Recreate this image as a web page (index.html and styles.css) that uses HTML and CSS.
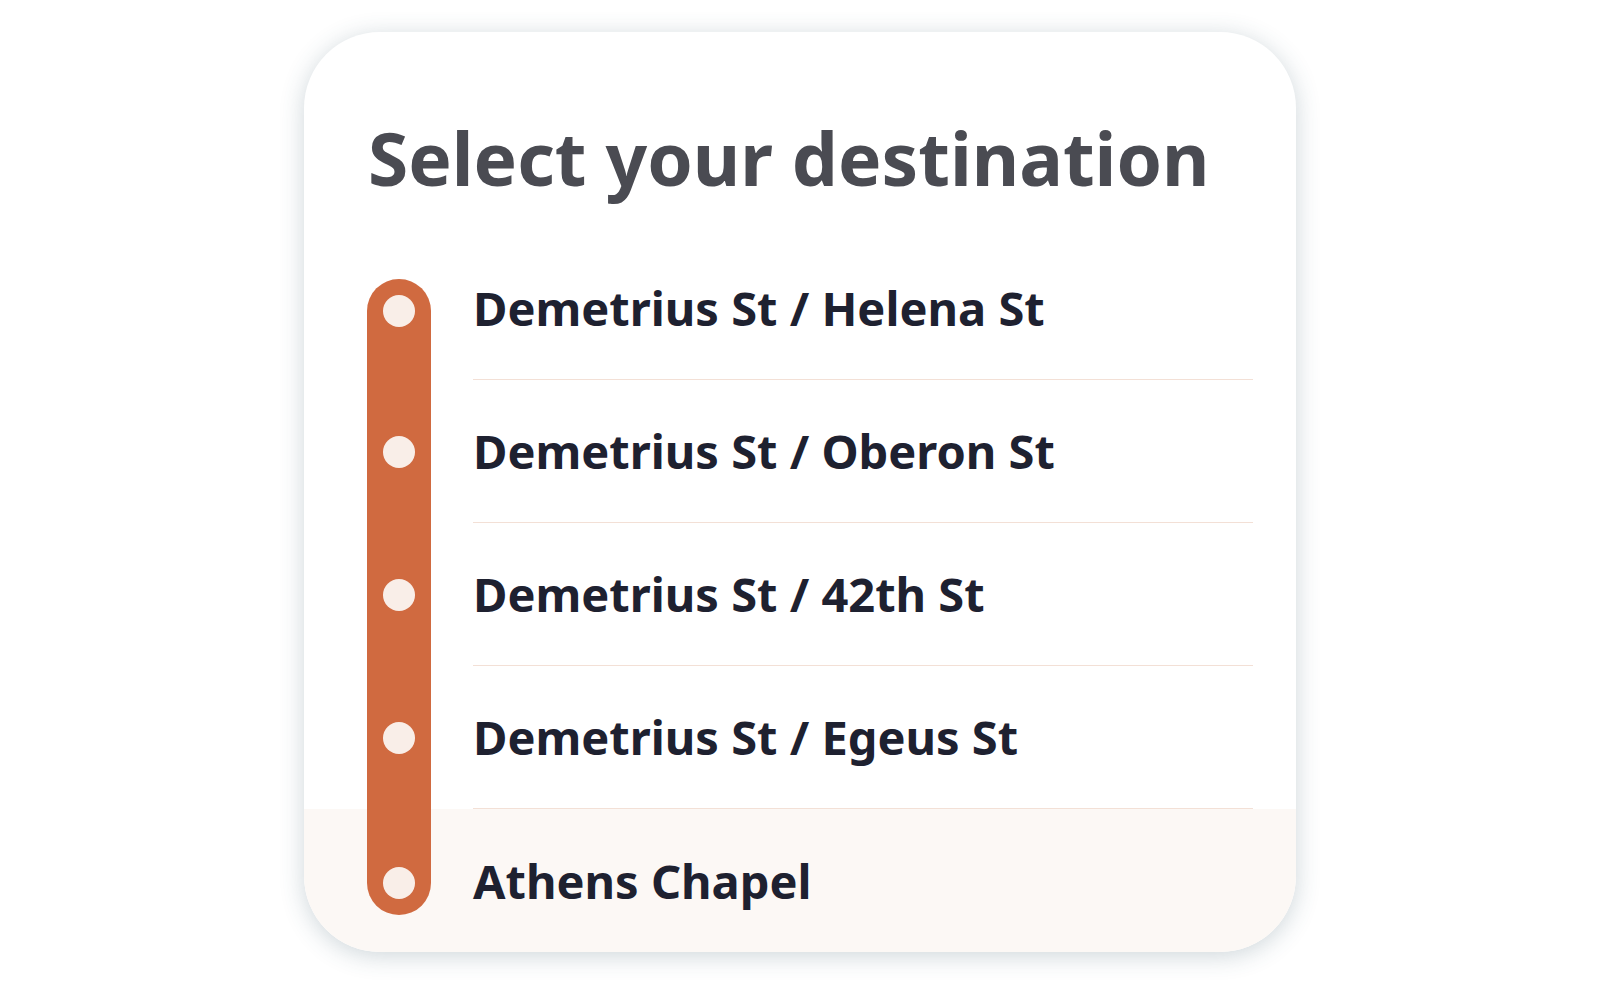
FILE: index.html
```html
<!DOCTYPE html>
<html>
<head lang="en">
    <meta charset="UTF-8">
    <title>Select your destination</title>
    <link rel="stylesheet" href="styles.css">
</head>
<body>
<div class="card">
    <h1 class="title">Select your destination</h1>
    <ul class="stops">
        <li class="stop first">
            <span class="rail"><span class="dot"></span></span>
            <span class="name">Demetrius St / Helena St</span>
        </li>
        <li class="stop">
            <span class="rail"><span class="dot"></span></span>
            <span class="name">Demetrius St / Oberon St</span>
        </li>
        <li class="stop">
            <span class="rail"><span class="dot"></span></span>
            <span class="name">Demetrius St / 42th St</span>
        </li>
        <li class="stop">
            <span class="rail"><span class="dot"></span></span>
            <span class="name">Demetrius St / Egeus St</span>
        </li>
        <li class="stop last">
            <span class="rail"><span class="dot"></span></span>
            <span class="name">Athens Chapel</span>
        </li>
    </ul>
</div>
</body>
</html>
```

FILE: styles.css
```css
*{
    margin: 0;
    padding: 0;
    box-sizing: border-box;
}
body{
    background: #fff;
    padding: 32px 0;
    font-family: "Noto Sans", Lato, sans-serif;
}
li{
    list-style: none;
}
.card{
    width: 992px;
    margin: 0 auto;
    background: #fff;
    border-radius: 76px;
    overflow: hidden;
    box-shadow: 0 4px 24px rgba(50, 85, 100, 0.24);
    padding-top: 79px;
}
.title{
    padding: 0 64px;
    font-size: 73px;
    line-height: 94px;
    font-weight: 700;
    color: #4a4b52;
    margin-bottom: 32px;
    white-space: nowrap;
}
.stop{
    display: flex;
    height: 143px;
    padding-left: 63px;
    gap: 42px;
}
.rail{
    width: 64px;
    flex-shrink: 0;
    background: #d06a40;
    display: flex;
    align-items: center;
    justify-content: center;
}
.dot{
    width: 32px;
    height: 32px;
    border-radius: 50%;
    background: #f9eee8;
}
.first .rail{
    margin-top: 42px;
    padding-top: 16px;
    align-items: flex-start;
    border-radius: 32px 32px 0 0;
}
.last .rail{
    margin-bottom: 37px;
    padding-bottom: 16px;
    align-items: flex-end;
    border-radius: 0 0 32px 32px;
}
.name{
    flex: 1;
    display: flex;
    align-items: center;
    margin-right: 43px;
    border-bottom: 1px solid #f3e0d6;
    font-size: 47px;
    font-weight: 700;
    color: #1e2130;
    white-space: nowrap;
}
.last{
    background: #fcf8f5;
}
.last .name{
    border-bottom: none;
}
```
